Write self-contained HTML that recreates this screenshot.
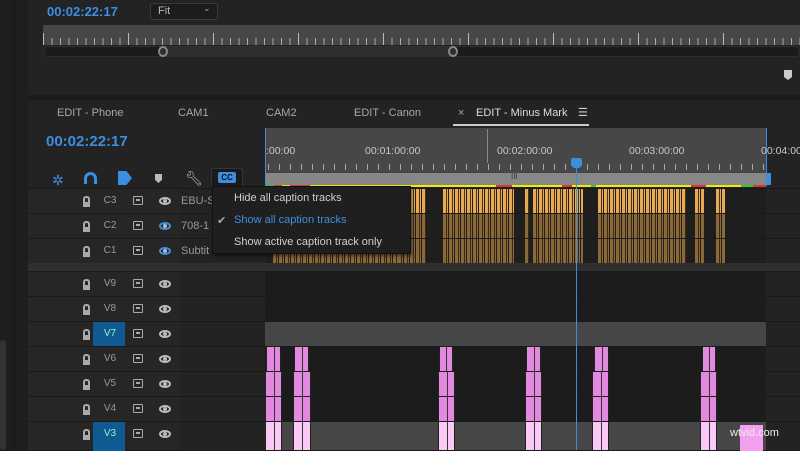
<!DOCTYPE html>
<html><head><meta charset="utf-8"><style>
*{margin:0;padding:0;box-sizing:border-box}
body{width:800px;height:450px;overflow:hidden;background:#1b1b1b;font-family:"Liberation Sans",sans-serif;position:relative}
.a{position:absolute}
.t{color:#a8a8a8;font-size:11px;white-space:nowrap}
.blue{color:#3d8ee0}
.row{position:absolute;left:28px;width:772px;border-top:1px solid #1a1a1a}
.hd{position:absolute;left:0;width:152px;height:100%;background:#262626}
.ct{position:absolute;left:237px;width:501px;height:100%}
.lk{position:absolute;left:55px;top:7px;width:7px;height:8px;border:2px solid #aaa;border-bottom:none;border-radius:3px 3px 0 0}
.lk:after{content:"";position:absolute;left:-2px;top:4px;width:7px;height:5px;background:#aaa}
.lbl{position:absolute;left:72px;top:6px;color:#9a9a9a;font-size:10px;width:20px;text-align:center}
.sy{position:absolute;left:105px;top:7px;width:10px;height:9px;border:1.5px solid #aaa;border-radius:1px}
.sy:after{content:"";position:absolute;left:2px;top:2px;width:4px;height:2px;background:#aaa}
.ey{position:absolute;left:131px;top:8px;width:12px;height:8px;border:2px solid #bbb;border-radius:50%}
.ey:after{content:"";position:absolute;left:2px;top:0px;width:4px;height:4px;background:#bbb;border-radius:50%}
.pk{position:absolute;top:0;height:100%;background:#e288df;border-left:1px solid #222;border-right:1px solid #222}
.pk:after{content:"";position:absolute;left:50%;top:0;width:1px;height:100%;background:#333}
.ob{position:absolute;top:0;height:100%;background:repeating-linear-gradient(90deg,#e8aa52 0 3px,#4a3418 3px 4px,#e8aa52 4px 5px,#1e1e1e 5px 6px)}
.od{position:absolute;top:0;height:100%;background:repeating-linear-gradient(90deg,#8b6838 0 3px,#3a2a15 3px 4px,#8b6838 4px 5px,#1e1e1e 5px 6px)}
</style></head><body>
<div class="a" style="left:0;top:0;width:28px;height:450px;background:#1e1e1e"></div>
<div class="a" style="left:14px;top:0;width:1px;height:450px;background:#151515"></div>
<div class="a" style="left:0;top:340px;width:6px;height:110px;background:#333;border-radius:3px"></div>
<div class="a" style="left:28px;top:0;width:772px;height:95px;background:#232323"></div>
<div class="a blue" style="left:47px;top:4px;font-size:13px;font-weight:bold">00:02:22:17</div>
<div class="a" style="left:150px;top:3px;width:68px;height:17px;background:#1c1c1c;border:1px solid #3a3a3a;border-radius:2px"></div>
<div class="a t" style="left:158px;top:5px;color:#bbb">Fit</div>
<div class="a t" style="left:203px;top:3px;color:#aaa;font-size:9px">⌄</div>
<div class="a" style="left:43px;top:25px;width:757px;height:20px;background:#474747"></div>
<div class="a" style="left:43px;top:38px;width:757px;height:7px;background:repeating-linear-gradient(90deg,#aaa 0 1px,transparent 1px 8.5px)"></div>
<div class="a" style="left:43px;top:33px;width:757px;height:12px;background:repeating-linear-gradient(90deg,#bbb 0 1px,transparent 1px 85px)"></div>
<div class="a" style="left:43px;top:46px;width:757px;height:11px;background:#1b1b1b;border-radius:5px;border:1px solid #2e2e2e"></div>
<div class="a" style="left:163px;top:47px;width:290px;height:9px;background:#2e2e2e"></div>
<div class="a" style="left:158px;top:46px;width:10px;height:11px;border:2px solid #888;border-radius:50%;background:#2e2e2e"></div>
<div class="a" style="left:448px;top:46px;width:10px;height:11px;border:2px solid #888;border-radius:50%;background:#2e2e2e"></div>
<div class="a" style="left:784px;top:70px;width:8px;height:10px;background:#ccc;clip-path:polygon(0 0,100% 0,100% 70%,50% 100%,0 70%)"></div>
<div class="a" style="left:28px;top:100px;width:772px;height:350px;background:#232323"></div>
<div class="a t" style="left:57px;top:107px">EDIT - Phone</div>
<div class="a t" style="left:178px;top:107px">CAM1</div>
<div class="a t" style="left:266px;top:107px">CAM2</div>
<div class="a t" style="left:354px;top:107px">EDIT - Canon</div>
<div class="a t" style="left:458px;top:107px">×</div>
<div class="a t" style="left:476px;top:107px;color:#ddd">EDIT - Minus Mark</div>
<div class="a t" style="left:578px;top:106px;color:#ccc">☰</div>
<div class="a" style="left:453px;top:124px;width:136px;height:2px;background:#ccc"></div>
<div class="a blue" style="left:46px;top:133px;font-size:15px;font-weight:bold">00:02:22:17</div>
<div class="a" style="left:266px;top:128px;width:500px;height:46px;background:#474747"></div>
<div class="a" style="left:265px;top:128px;width:1px;height:58px;background:#3d8ee0"></div>
<div class="a" style="left:766px;top:128px;width:1px;height:58px;background:#3d8ee0"></div>
<div class="a" style="left:487px;top:129px;width:1px;height:34px;background:#888"></div>
<div class="a t" style="left:266px;top:145px;font-size:10.5px;color:#c8c8c8">:00:00</div>
<div class="a t" style="left:365px;top:145px;font-size:10.5px;color:#c8c8c8">00:01:00:00</div>
<div class="a t" style="left:497px;top:145px;font-size:10.5px;color:#c8c8c8">00:02:00:00</div>
<div class="a t" style="left:629px;top:145px;font-size:10.5px;color:#c8c8c8">00:03:00:00</div>
<div class="a t" style="left:761px;top:145px;font-size:10.5px;color:#c8c8c8">00:04:00</div>
<div class="a" style="left:268px;top:164px;width:498px;height:6px;background:repeating-linear-gradient(90deg,#aaa 0 1px,transparent 1px 11px)"></div>
<div class="a" style="left:266px;top:173px;width:500px;height:12px;background:#878787"></div>
<div class="a t" style="left:511px;top:172px;font-size:8px;color:#333">III</div>
<div class="a" style="left:767px;top:173px;width:4px;height:12px;background:#3d8ee0"></div>
<div class="a" style="left:266px;top:185px;width:500px;height:2px;background:linear-gradient(90deg,#3c3 0 8px,#d33 8px 16px,#ee0 16px 24px,#d33 24px 44px,#ee0 44px 230px,#d33 230px 246px,#ee0 246px 296px,#d33 296px 306px,#ee0 306px 325px,#3c3 325px 330px,#ee0 330px 425px,#d33 425px 440px,#ee0 440px 475px,#3c3 475px 487px,#d33 487px 500px)"></div>
<div class="a" style="left:52px;top:172px;color:#3d8ee0;font-size:14px">✲</div>
<div class="a" style="left:84px;top:172px;width:13px;height:12px;border:3px solid #3d8ee0;border-bottom:none;border-radius:7px 7px 0 0"></div>
<div class="a" style="left:118px;top:171px;width:14px;height:14px;background:#3d8ee0;clip-path:polygon(0 0,60% 0,100% 50%,60% 100%,0 100%)"></div>
<div class="a" style="left:155px;top:174px;width:7px;height:9px;background:#bbb;clip-path:polygon(0 0,100% 0,100% 65%,50% 100%,0 65%)"></div>
<div class="a" style="left:185px;top:170px;color:#bbb;font-size:14px">🔧︎</div>
<div class="a" style="left:211px;top:168px;width:32px;height:19px;background:#1a1a1a;border:1px solid #333;border-radius:2px"></div>
<div class="a" style="left:218px;top:172px;width:18px;height:11px;background:#3d8ee0;border-radius:2px;color:#111;font-size:8px;font-weight:bold;text-align:center;line-height:11px">CC</div>
<div class="row" style="top:188px;height:25px"><div class="hd"></div><div class="lk"></div><div class="lbl">C3</div><div class="sy"></div><div class="ey"></div><div class="a t" style="left:153px;top:6px;color:#999">EBU-S</div>
<div class="ct" style="background:#1e1e1e"><div class="ob" style="left:133px;width:28px"></div><div class="ob" style="left:178px;width:72px"></div><div class="ob" style="left:260px;width:4px"></div><div class="ob" style="left:268px;width:50px"></div><div class="ob" style="left:333px;width:88px"></div><div class="ob" style="left:430px;width:9px"></div><div class="ob" style="left:451px;width:9px"></div></div></div>
<div class="row" style="top:213px;height:25px"><div class="hd"></div><div class="lk"></div><div class="lbl">C2</div><div class="sy"></div><div class="ey" style="border-color:#3d8ee0"></div><div class="a t" style="left:153px;top:6px;color:#999">708-1</div>
<div class="ct" style="background:#1e1e1e"><div class="od" style="left:133px;width:28px"></div><div class="od" style="left:178px;width:72px"></div><div class="od" style="left:260px;width:4px"></div><div class="od" style="left:268px;width:50px"></div><div class="od" style="left:333px;width:88px"></div><div class="od" style="left:430px;width:9px"></div><div class="od" style="left:451px;width:9px"></div></div></div>
<div class="row" style="top:238px;height:25px"><div class="hd"></div><div class="lk"></div><div class="lbl">C1</div><div class="sy"></div><div class="ey" style="border-color:#3d8ee0"></div><div class="a t" style="left:153px;top:6px;color:#999">Subtit</div>
<div class="ct" style="background:#1e1e1e"><div class="od" style="left:8px;width:125px"></div><div class="od" style="left:133px;width:28px"></div><div class="od" style="left:178px;width:72px"></div><div class="od" style="left:260px;width:4px"></div><div class="od" style="left:268px;width:50px"></div><div class="od" style="left:333px;width:88px"></div><div class="od" style="left:430px;width:9px"></div><div class="od" style="left:451px;width:9px"></div></div></div>
<div class="a" style="left:28px;top:263px;width:772px;height:8px;background:#2f2f2f"></div>
<div class="row" style="top:271px;height:25px"><div class="hd"></div><div class="lk"></div><div class="lbl">V9</div><div class="sy"></div><div class="ey"></div><div class="ct" style="background:#1c1c1c"></div></div>
<div class="row" style="top:296px;height:25px"><div class="hd"></div><div class="lk"></div><div class="lbl">V8</div><div class="sy"></div><div class="ey"></div><div class="ct" style="background:#1c1c1c"></div></div>
<div class="row" style="top:321px;height:25px"><div class="hd"></div><div class="a" style="left:65px;top:0;width:32px;height:25px;background:#0e5a91"></div><div class="lk"></div><div class="lbl" style="color:#9ec">V7</div><div class="sy"></div><div class="ey"></div><div class="ct" style="background:#464646"></div></div>
<div class="row" style="top:346px;height:25px"><div class="hd"></div><div class="lk"></div><div class="lbl">V6</div><div class="sy"></div><div class="ey"></div><div class="ct" style="background:#1c1c1c"><div class="pk" style="left:1px;width:15px"></div><div class="pk" style="left:29px;width:15px"></div><div class="pk" style="left:174px;width:14px"></div><div class="pk" style="left:261px;width:15px"></div><div class="pk" style="left:329px;width:15px"></div><div class="pk" style="left:437px;width:14px"></div></div></div>
<div class="row" style="top:371px;height:25px"><div class="hd"></div><div class="lk"></div><div class="lbl">V5</div><div class="sy"></div><div class="ey"></div><div class="ct" style="background:#1c1c1c"><div class="pk" style="left:0;width:17px"></div><div class="pk" style="left:28px;width:18px"></div><div class="pk" style="left:173px;width:17px"></div><div class="pk" style="left:260px;width:17px"></div><div class="pk" style="left:327px;width:17px"></div><div class="pk" style="left:435px;width:17px"></div></div></div>
<div class="row" style="top:396px;height:25px"><div class="hd"></div><div class="lk"></div><div class="lbl">V4</div><div class="sy"></div><div class="ey"></div><div class="ct" style="background:#1c1c1c"><div class="pk" style="left:0;width:17px"></div><div class="pk" style="left:28px;width:18px"></div><div class="pk" style="left:173px;width:17px"></div><div class="pk" style="left:260px;width:17px"></div><div class="pk" style="left:327px;width:17px"></div><div class="pk" style="left:435px;width:17px"></div></div></div>
<div class="row" style="top:421px;height:29px"><div class="hd"></div><div class="a" style="left:65px;top:0;width:32px;height:29px;background:#0e5a91"></div><div class="lk"></div><div class="lbl" style="color:#9ec">V3</div><div class="sy"></div><div class="ey"></div><div class="ct" style="background:#464646"><div class="pk" style="left:0;width:17px;background:#fbc9f6"></div><div class="pk" style="left:28px;width:18px;background:#fbc9f6"></div><div class="pk" style="left:173px;width:17px;background:#fbc9f6"></div><div class="pk" style="left:260px;width:17px;background:#fbc9f6"></div><div class="pk" style="left:327px;width:17px;background:#fbc9f6"></div><div class="pk" style="left:435px;width:17px;background:#fbc9f6"></div><div class="a" style="left:475px;top:3px;width:23px;height:26px;background:#f39ff0"></div></div></div>
<div class="a" style="left:730px;top:427px;font-size:11px;color:#eee">wtvid.com</div>
<div class="a" style="left:576px;top:160px;width:1px;height:290px;background:#3d8ee0"></div>
<div class="a" style="left:571px;top:158px;width:11px;height:10px;background:#3d8ee0;border-radius:2px 2px 4px 4px"></div>
<div class="a" style="left:212px;top:186px;width:199px;height:68px;background:#1f1f1f;border:1px solid #111;box-shadow:1px 2px 3px rgba(0,0,0,.5)"></div>
<div class="a t" style="left:234px;top:192px;color:#d0d0d0">Hide all caption tracks</div>
<div class="a t" style="left:217px;top:214px;color:#aaa">✔</div>
<div class="a t" style="left:234px;top:214px;color:#3d8ee0">Show all caption tracks</div>
<div class="a t" style="left:234px;top:236px;color:#d0d0d0">Show active caption track only</div>
</body></html>
